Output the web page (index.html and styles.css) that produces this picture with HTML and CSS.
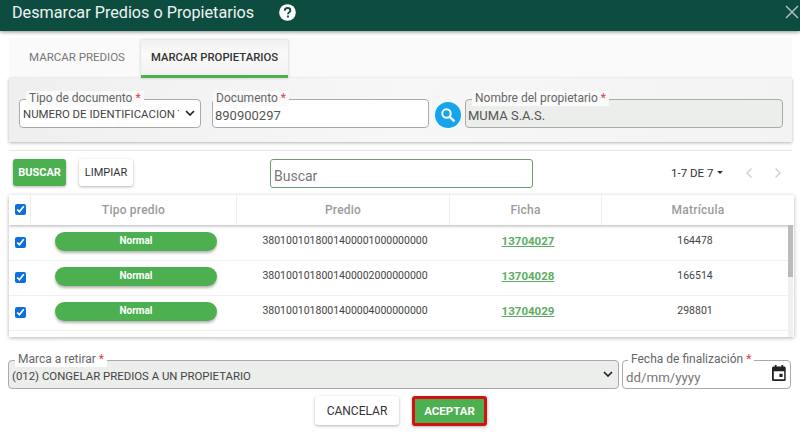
FILE: index.html
```html
<!DOCTYPE html>
<html lang="es">
<head>
    <meta charset="UTF-8">
    <meta name="viewport" content="width=device-width, initial-scale=1.0">
    <title>Desmarcar Predios o Propietarios</title>
    <link rel="stylesheet" href="styles.css">
</head>
<body>
    <header class="top-bar">
        <h1>Desmarcar Predios o Propietarios</h1>
        <svg class="help-icon" viewBox="0 0 18 18" width="17" height="17">
            <circle cx="9" cy="9" r="8.8" fill="#fff"/>
            <path d="M6.1 7.2c0-1.8 1.3-2.9 3-2.9s2.9 1 2.9 2.5c0 2-2.5 2.1-2.5 4" fill="none" stroke="#0d4d40" stroke-width="2"/>
            <rect x="8.4" y="12.2" width="2.1" height="2.1" fill="#0d4d40"/>
        </svg>
        <svg class="close-icon" viewBox="0 0 14 14" width="14" height="14">
            <path d="M1 1l12 12M13 1L1 13" stroke="#a9c0ba" stroke-width="1.5" fill="none"/>
        </svg>
    </header>

    <nav class="tabs">
        <a class="tab">MARCAR PREDIOS</a>
        <a class="tab active">MARCAR PROPIETARIOS</a>
    </nav>

    <section class="owner-panel">
        <div class="field field-type">
            <label>Tipo de documento <b>*</b></label>
            <div class="control select-box">
                <span>NUMERO DE IDENTIFICACION TRIBUTARIA</span>
                <svg viewBox="0 0 10 6" width="10" height="6"><path d="M1 1l4 4 4-4" fill="none" stroke="#222" stroke-width="1.7"/></svg>
            </div>
        </div>
        <div class="field field-doc">
            <label>Documento <b>*</b></label>
            <input class="control" type="text" value="890900297">
        </div>
        <button class="search-round" type="button">
            <svg viewBox="0 0 16 16" width="16" height="16">
                <circle cx="6.5" cy="6.5" r="4.2" fill="none" stroke="#fff" stroke-width="2"/>
                <path d="M9.8 9.8l4.6 4.6" stroke="#fff" stroke-width="2.4"/>
            </svg>
        </button>
        <div class="field field-owner">
            <label>Nombre del propietario <b>*</b></label>
            <input class="control readonly" type="text" value="MUMA S.A.S." readonly>
        </div>
    </section>

    <div class="toolbar">
        <button class="btn btn-green" type="button">BUSCAR</button>
        <button class="btn btn-white" type="button">LIMPIAR</button>
        <input class="table-search" type="text" placeholder="Buscar">
        <div class="pager">
            <span>1-7 DE 7</span>
            <i class="caret"></i>
            <svg class="pager-arrow first" viewBox="0 0 8 12" width="8" height="12"><path d="M6.5 1.5L2 6l4.5 4.5" fill="none" stroke="#cfcfcf" stroke-width="1.4"/></svg>
            <svg class="pager-arrow" viewBox="0 0 8 12" width="8" height="12"><path d="M1.5 1.5L6 6l-4.5 4.5" fill="none" stroke="#cfcfcf" stroke-width="1.4"/></svg>
        </div>
    </div>

    <section class="grid-card">
        <div class="grid-head row">
            <div class="cell col-check"><input type="checkbox" checked></div>
            <div class="cell col-type">Tipo predio</div>
            <div class="cell col-predio">Predio</div>
            <div class="cell col-ficha">Ficha</div>
            <div class="cell col-matricula">Matrícula</div>
        </div>
        <div class="grid-body">
            <div class="row item">
                <div class="cell col-check"><input type="checkbox" checked></div>
                <div class="cell col-type"><span class="pill">Normal</span></div>
                <div class="cell col-predio">3801001018001400001000000000</div>
                <div class="cell col-ficha"><a>13704027</a></div>
                <div class="cell col-matricula">164478</div>
            </div>
            <div class="row item">
                <div class="cell col-check"><input type="checkbox" checked></div>
                <div class="cell col-type"><span class="pill">Normal</span></div>
                <div class="cell col-predio">3801001018001400002000000000</div>
                <div class="cell col-ficha"><a>13704028</a></div>
                <div class="cell col-matricula">166514</div>
            </div>
            <div class="row item">
                <div class="cell col-check"><input type="checkbox" checked></div>
                <div class="cell col-type"><span class="pill">Normal</span></div>
                <div class="cell col-predio">3801001018001400004000000000</div>
                <div class="cell col-ficha"><a>13704029</a></div>
                <div class="cell col-matricula">298801</div>
            </div>
            <div class="row item">
                <div class="cell col-check"></div>
                <div class="cell col-type"><span class="pill"></span></div>
            </div>
            <div class="scroll-track"><div class="scroll-thumb"></div></div>
        </div>
    </section>

    <div class="bottom-fields">
        <div class="field field-mark">
            <label>Marca a retirar <b>*</b></label>
            <div class="control select-box readonly">
                <span>(012) CONGELAR PREDIOS A UN PROPIETARIO</span>
                <svg viewBox="0 0 10 6" width="10" height="6"><path d="M1 1l4 4 4-4" fill="none" stroke="#222" stroke-width="1.7"/></svg>
            </div>
        </div>
        <div class="field field-date">
            <label>Fecha de finalización <b>*</b></label>
            <div class="control date-box">
                <span>dd/mm/yyyy</span>
                <svg viewBox="0 0 14 16" width="14" height="16">
                    <path d="M2.8 0h1.8v1.6h4.8V0h1.8v1.6h.9c.9 0 1.6.7 1.6 1.6v11.2c0 .9-.7 1.6-1.6 1.6H1.6C.7 16 0 15.300 0 14.400V3.200c0-.9.7-1.600 1.600-1.600h1.200z M1.800 6.200v8h10.400v-8z" fill="#222" fill-rule="evenodd"/>
                    <rect x="7.400" y="8.800" width="3.200" height="3.200" fill="#222"/>
                </svg>
            </div>
        </div>
    </div>

    <div class="actions">
        <button class="btn btn-white btn-cancel" type="button">CANCELAR</button>
        <button class="btn btn-green btn-accept" type="button">ACEPTAR</button>
    </div>
</body>
</html>
```

FILE: styles.css
```css
* { box-sizing: border-box; }
html, body { height: 100%; }
body { margin: 0; background-color: #fff; font-family: Roboto, "Liberation Sans", sans-serif; color: #444; overflow: hidden; }

.top-bar { height: 31px; background-color: #0d4d40; display: flex; align-items: center; padding: 0 1px 6px 12px; box-shadow: 0 1px 4px rgba(0, 0, 0, 0.45); position: relative; }
.top-bar h1 { margin: 0; font-size: 16.2px; font-weight: 400; color: #eef4f2; }
.help-icon { margin-left: 25px; }
.close-icon { margin-left: auto; margin-bottom: 2px; }

.tabs { display: flex; height: 40px; margin: 7px 8px 0 9px; padding-left: 1px; padding-top: 2px; background-color: #fafafa; }
.tab { font-size: 11.5px; height: 38px; display: flex; align-items: center; color: #777; white-space: nowrap; }
.tab:first-child { width: 131px; padding-left: 19px; padding-bottom: 5px; }
.tab.active { width: 147px; font-size: 11.3px; color: #333; font-weight: 500; justify-content: center; background: linear-gradient(#f0f0f0, #fafafa 40%, #f2f2f2); border-bottom: 3px solid #4caf50; box-shadow: 0 0 3px rgba(0, 0, 0, 0.2); }

.owner-panel { display: flex; gap: 11px; margin: 0 8px 0 9px; height: 64px; padding: 21px 9px 0 10px; background: linear-gradient(100deg, #efefef, #f7f7f7 50%, #f3f3f3); box-shadow: 0 1px 3px rgba(0, 0, 0, 0.3); }

.field { position: relative; height: 29px; flex: none; }
.field label { position: absolute; left: 7px; top: -8px; padding: 0 3px; font-size: 12px; line-height: 15px; color: #666; background-color: #fafafa; white-space: nowrap; }
.field label b { font-weight: 400; color: #d44; }
.control { display: block; width: 100%; height: 100%; border: 1px solid #aaa; border-radius: 4px; background-color: #fff; font-family: inherit; font-size: 13px; color: #555; padding: 3px 2px 0; outline: none; }
.readonly { background-color: #eceeec; }

.select-box { display: flex; align-items: center; gap: 6px; padding: 1px 5px 0 3px; font-size: 11.4px; color: #444; }
.select-box span { flex: 1; overflow: hidden; white-space: nowrap; }
.select-box svg { flex: none; margin-bottom: 3px; }

.field-type { width: 182px; }
.field-doc { width: 217px; }
.field-doc label { left: 1px; }
.field-owner { width: 318px; margin-left: -7px; }
.search-round { flex: none; width: 26px; height: 26px; margin: 3px 0 0 -5px; padding: 0; border: 0; border-radius: 50%; background-color: #14a5ec; display: flex; align-items: center; justify-content: center; }

.toolbar { display: flex; align-items: flex-start; height: 45px; margin: 8px 8px 0 9px; padding: 8px 0 0 4px; border-top: 1px solid #e6e6e6; }
.btn { border: 0; border-radius: 3px; font-family: Roboto, "Liberation Sans", sans-serif; font-size: 11px; font-weight: 400; box-shadow: 0 1px 3px rgba(0, 0, 0, 0.3); padding: 0; }
.btn-green { background-color: #4caf50; color: #fff; font-weight: 700; }
.btn-white { background-color: #fff; color: #333; }
.toolbar .btn { height: 27px; }
.toolbar .btn-green { width: 53px; }
.toolbar .btn-white { width: 54px; margin-left: 13px; }
.table-search { width: 263px; height: 29px; margin-left: 137px; padding: 5px 3px 0; border: 1px solid #6d9c74; border-radius: 3px; font-family: inherit; font-size: 14px; outline: none; }
.table-search::placeholder { color: #777; }
.pager { display: flex; align-items: center; margin: 5px 0 0 138px; font-size: 11.5px; color: #333; height: 18px; }
.caret { width: 0; height: 0; margin-left: 4px; margin-bottom: 2px; border-left: 3px solid transparent; border-right: 3px solid transparent; border-top: 3px solid #333; }
.pager-arrow { margin-left: 21px; }
.pager-arrow.first { margin-left: 22px; }

.grid-card { margin: 0 6px 0 9px; height: 142px; overflow: hidden; background-color: #fff; box-shadow: 0 1px 4px rgba(0, 0, 0, 0.3); }
.row { display: flex; }
.cell { display: flex; align-items: center; justify-content: center; font-size: 10.5px; color: #444; flex: none; }
.cell input { margin: 2px 0 0; width: 11px; height: 11px; accent-color: #0b6fe0; }
.col-check { width: 22px; }
.col-type { width: 206px; }
.col-predio { width: 213px; }
.col-ficha { width: 152px; }
.col-matricula { width: 186px; }
.grid-head { height: 30px; box-shadow: 0 1px 3px rgba(0, 0, 0, 0.3); position: relative; }
.grid-head .cell { font-size: 12px; font-weight: 500; color: #9b9b9b; letter-spacing: 0.22px; border-right: 1px solid #eee; }
.grid-head .col-check input { margin: 0 0 2px 2px; }
.grid-head .col-matricula { width: 192px; border-right: 0; }
.grid-body { position: relative; padding-top: 1px; }
.item { height: 35px; border-bottom: 1px solid #f0f0f0; padding-bottom: 4px; }
.item .col-predio { padding: 0 0 2px 3px; }
.item .col-matricula { padding-bottom: 2px; }
.pill { width: 162px; height: 19px; margin-left: 4px; border-radius: 10px; background-color: #4caf50; color: #fff; font-size: 10px; font-weight: 700; line-height: 18px; text-align: center; box-shadow: 0 2px 3px rgba(0, 0, 0, 0.3); }
.col-ficha a { margin-left: 4px; color: #5cad61; font-size: 11.5px; font-weight: 700; text-decoration: underline; }
.scroll-track { position: absolute; top: 0; right: 1px; width: 5px; height: 112px; background-color: #f0f0f0; }
.scroll-thumb { height: 52px; background-color: #bbb; }

.bottom-fields { display: flex; gap: 3px; margin: 23px 9px 0 8px; }
.field-mark { width: 611px; }
.field-mark label, .field-date label { background-color: #fff; }
.field-mark .select-box { padding-top: 3px; }
.field-mark .select-box svg { margin-bottom: 4px; }
.field-date { width: 169px; }
.field-date label { left: 6px; }
.date-box { display: flex; align-items: center; justify-content: space-between; padding: 0 4px 0 3px; font-size: 13.3px; color: #777; }
.date-box span { margin-top: 5px; }
.date-box svg { margin-bottom: 3px; }

.actions { display: flex; justify-content: center; align-items: flex-start; gap: 13px; margin-top: 7px; padding-left: 2px; }
.actions .btn { font-size: 12px; height: 29px; }
.btn-cancel { width: 84px; }
.actions .btn-accept { width: 75px; height: 30px; font-size: 11.5px; border: 3px solid #d70f0f; }
```
